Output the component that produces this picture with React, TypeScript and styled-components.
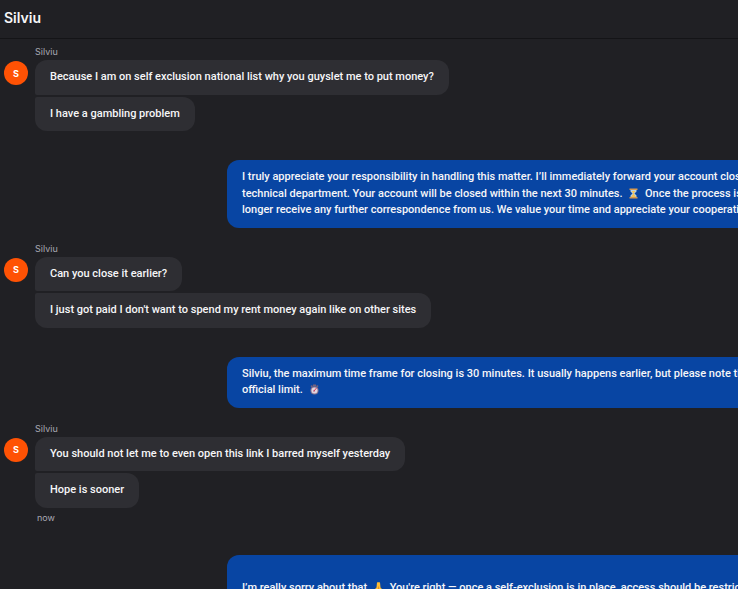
import React from "react";
import styled, { createGlobalStyle } from "styled-components";

const GlobalStyle = createGlobalStyle`
  *, *::before, *::after { box-sizing: border-box; }
  body {
    margin: 0;
    background: #202024;
    color: #f6f6f8;
    font-family: Inter, "Liberation Sans", sans-serif;
    font-size: 11px;
  }
`;

const Page = styled.div`
  display: flex;
  flex-direction: column;
  height: 100vh;
  overflow: hidden;
`;

const Header = styled.header`
  flex: none;
  padding: 8px 4px 10px;
  border-bottom: 1px solid #141417;
`;

const Title = styled.h1`
  margin: 0;
  font-size: 14px;
  line-height: 20px;
  font-weight: 600;
`;

const Conversation = styled.main`
  flex: 1;
  min-height: 0;
  overflow: hidden;
  display: flex;
  flex-direction: column;
  gap: 29px;
  padding-top: 21px;
`;

const Incoming = styled.section`
  flex: none;
  display: flex;
  align-items: flex-start;
  gap: 7px;
  padding-left: 4px;
`;

const Avatar = styled.div`
  flex: none;
  display: grid;
  place-items: center;
  width: 24px;
  height: 24px;
  margin-top: 1px;
  border-radius: 50%;
  background: #ff5204;
  color: #ffffff;
  font-size: 9px;
  font-weight: 700;
`;

const Thread = styled.div`
  display: flex;
  flex-direction: column;
  align-items: flex-start;
  gap: 2px;
`;

const Sender = styled.div`
  height: 14px;
  margin-top: -16px;
  color: #a9a9b4;
  font-size: 9px;
  line-height: 16px;
`;

const Bubble = styled.p<{ $position: "first" | "last" }>`
  margin: 0;
  padding: 9px 15px;
  background: #2e2e33;
  border-radius: ${(p) => (p.$position === "first" ? "12px 12px 12px 2px" : "2px 12px 12px 12px")};
  font-family: Roboto, Inter, sans-serif;
  font-weight: 500;
  line-height: 1.5;
`;

const Time = styled.time`
  padding-left: 2px;
  color: #a9a9b4;
  font-size: 9px;
  line-height: 16px;
`;

const Outgoing = styled.p`
  flex: none;
  align-self: flex-start;
  width: max-content;
  margin: 0 0 0 227px;
  padding: 9px 15px;
  border-radius: 12px;
  background: #0845a3;
  font-family: Roboto, Inter, sans-serif;
  font-weight: 500;
  line-height: 1.5;
  white-space: pre;
`;

const Emoji = styled.svg`
  display: inline-block;
  width: 11px;
  height: 11px;
  margin: 0 3px;
  vertical-align: -2px;
`;

function Hourglass() {
  return (
    <Emoji viewBox="0 0 22 22" role="img" aria-label="hourglass">
      <path d="M5 3h12v4l-4 4 4 4v4H5v-4l4-4-4-4z" fill="#b9d2e4" />
      <path d="M7 6h8l-3 4v2l4 6H6l4-6v-2z" fill="#f2c35c" />
      <path d="M3 1h16v3H3zM3 18h16v3H3z" fill="#d99a4e" />
    </Emoji>
  );
}

function Stopwatch() {
  return (
    <Emoji viewBox="0 0 22 22" role="img" aria-label="stopwatch">
      <path d="M8 1h6v4H8zM3 4l3-2 2 3-3 2zM19 4l-3-2-2 3 3 2z" fill="#77627c" />
      <circle cx="11" cy="13" r="8" fill="#8c7792" />
      <circle cx="11" cy="13" r="6" fill="#e2d6e0" />
      <path d="M10 14l5-6" stroke="#df3858" strokeWidth="2" />
      <circle cx="10" cy="14" r="1.5" fill="#ad4261" />
    </Emoji>
  );
}

function PointingHand() {
  return (
    <Emoji viewBox="0 0 22 22" role="img" aria-label="hand">
      <path d="M8 1c1-1 5-1 6 0l1 10 4 4-3 7H6l-3-7 4-4z" fill="#ffbd35" />
      <path d="M11 9v12" stroke="#ce7820" strokeWidth="1.2" />
    </Emoji>
  );
}

function CustomerMessages({ first, last, time }: { first: string; last: string; time?: string }) {
  return (
    <Incoming>
      <Avatar aria-hidden="true">S</Avatar>
      <Thread>
        <Sender>Silviu</Sender>
        <Bubble $position="first">{first}</Bubble>
        <Bubble $position="last">{last}</Bubble>
        {time && <Time>{time}</Time>}
      </Thread>
    </Incoming>
  );
}

export default function App() {
  return (
    <Page>
      <GlobalStyle />
      <Header>
        <Title>Silviu</Title>
      </Header>
      <Conversation>
        <CustomerMessages
          first="Because I am on self exclusion national list why you guyslet me to put money?"
          last="I have a gambling problem"
        />
        <Outgoing>
          I truly appreciate your responsibility in handling this matter. I’ll immediately forward your account closure to the
          <br />
          technical department. Your account will be closed within the next 30 minutes. <Hourglass />
          {" Once the process is complete, you will no"}
          <br />
          longer receive any further correspondence from us. We value your time and appreciate your cooperation.
        </Outgoing>
        <CustomerMessages
          first="Can you close it earlier?"
          last="I just got paid I don't want to spend my rent money again like on other sites"
        />
        <Outgoing>
          Silviu, the maximum time frame for closing is 30 minutes. It usually happens earlier, but please note that this is the
          <br />
          official limit. <Stopwatch />
        </Outgoing>
        <CustomerMessages
          first="You should not let me to even open this link I barred myself yesterday"
          last="Hope is sooner"
          time="now"
        />
        <Outgoing>
          <br />
          I’m really sorry about that <PointingHand />
          {" You're right — once a self-exclusion is in place, access should be restricted."}
        </Outgoing>
      </Conversation>
    </Page>
  );
}
